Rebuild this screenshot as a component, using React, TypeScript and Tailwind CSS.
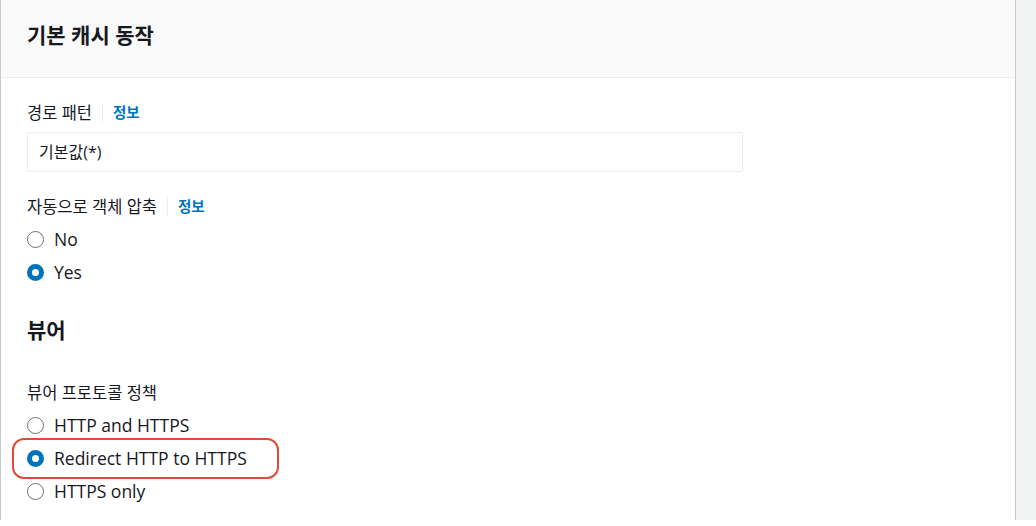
import React from "react";

function Radio({ checked }: { checked?: boolean }) {
  return checked ? (
    <span className="inline-block w-[17px] h-[17px] rounded-full border-[5px] border-[#0073bb] bg-white shrink-0" />
  ) : (
    <span className="inline-block w-[17px] h-[17px] rounded-full border-[1.5px] border-[#687078] bg-white shrink-0" />
  );
}

function Option({ label, checked }: { label: string; checked?: boolean }) {
  return (
    <div className="flex items-center gap-[10px] h-[33px]">
      <Radio checked={checked} />
      <span className="text-[17.5px] text-[#16191f]">{label}</span>
    </div>
  );
}

function Label({ text, info }: { text: string; info?: boolean }) {
  return (
    <div className="flex items-center h-[22px] text-[16.5px] text-[#16191f]">
      <span>{text}</span>
      {info && (
        <>
          <span className="mx-[10px] w-px h-[20px] bg-[#eaeded]" />
          <span className="text-[14.5px] font-bold text-[#0073bb]">정보</span>
        </>
      )}
    </div>
  );
}

export default function App() {
  return (
    <div
      className="w-[1036px] h-[526px] bg-white"
      style={{ fontFamily: '"Open Sans", "Noto Sans CJK KR", sans-serif' }}
    >
      <div className="flex h-[520px]">
        <div className="w-[1016px] h-full border-l-[1.5px] border-r-[1.5px] border-[#c5ccce] bg-white flex flex-col">
          <div className="h-[78px] bg-[#fafafa] border-b-[1.5px] border-[#eeeeee] flex items-center pl-[26px]">
            <h2 className="text-[21px] font-bold text-[#16191f] mt-[-6px]">기본 캐시 동작</h2>
          </div>
          <div className="pl-[26px] pt-[24px]">
            <Label text="경로 패턴" info />
            <div className="mt-[8px] w-[716px] h-[40px] border border-[#eaeded] rounded-[2px] flex items-center pl-[11px] text-[16px] text-[#16191f]">
              기본값(*)
            </div>
            <div className="mt-[24px]">
              <Label text="자동으로 객체 압축" info />
            </div>
            <div className="mt-[5px]">
              <Option label="No" />
              <Option label="Yes" checked />
            </div>
            <h3 className="mt-[26px] text-[21px] font-bold text-[#16191f] h-[30px] leading-[30px]">뷰어</h3>
            <div className="mt-[37px]">
              <Label text="뷰어 프로토콜 정책" />
            </div>
            <div className="mt-[5px]">
              <Option label="HTTP and HTTPS" />
              <div className="relative">
                <Option label="Redirect HTTP to HTTPS" checked />
                <div className="absolute left-[-15px] top-[-4px] w-[267px] h-[41px] border-2 border-[#e2493a] rounded-[12px]" />
              </div>
              <Option label="HTTPS only" />
            </div>
          </div>
        </div>
        <div className="flex-1 h-full bg-[#f2f3f3]" />
      </div>
    </div>
  );
}
